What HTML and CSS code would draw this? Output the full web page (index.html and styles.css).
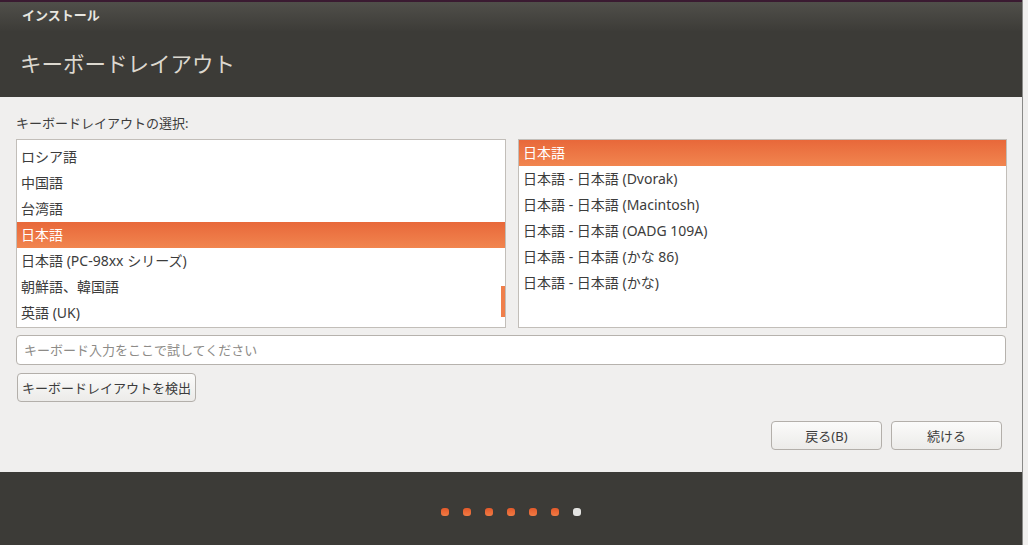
FILE: index.html
```html
<!DOCTYPE html>
<html lang="ja">
<head>
  <meta charset="UTF-8">
  <title>インストール</title>
  <link rel="stylesheet" href="styles.css">
</head>
<body>
  <div class="installer">
    <div class="top-strip"></div>

    <!-- Header -->
    <div class="header">
      <div class="window-title">インストール</div>
      <h1>キーボードレイアウト</h1>
    </div>

    <!-- Main content -->
    <div class="content">
      <p class="label">キーボードレイアウトの選択:</p>

      <div class="lists">
        <div class="list left-list">
          <div class="row">ロシア語</div>
          <div class="row">中国語</div>
          <div class="row">台湾語</div>
          <div class="row selected">日本語</div>
          <div class="row">日本語 (PC-98xx シリーズ)</div>
          <div class="row">朝鮮語、韓国語</div>
          <div class="row">英語 (UK)</div>
          <div class="scroll-thumb"></div>
        </div>
        <div class="list right-list">
          <div class="row selected">日本語</div>
          <div class="row">日本語 - 日本語 (Dvorak)</div>
          <div class="row">日本語 - 日本語 (Macintosh)</div>
          <div class="row">日本語 - 日本語 (OADG 109A)</div>
          <div class="row">日本語 - 日本語 (かな 86)</div>
          <div class="row">日本語 - 日本語 (かな)</div>
        </div>
      </div>

      <input class="test-input" type="text" placeholder="キーボード入力をここで試してください">

      <div>
        <button class="btn detect-btn">キーボードレイアウトを検出</button>
      </div>

      <div class="nav">
        <button class="btn nav-btn">戻る(B)</button>
        <button class="btn nav-btn">続ける</button>
      </div>
    </div>

    <!-- Progress dots -->
    <div class="footer">
      <span class="dot"></span>
      <span class="dot"></span>
      <span class="dot"></span>
      <span class="dot"></span>
      <span class="dot"></span>
      <span class="dot"></span>
      <span class="dot current"></span>
    </div>
  </div>
  <div class="desktop-edge"></div>
</body>
</html>
```

FILE: styles.css
```css
/* General */
body {
  margin: 0;
  height: 545px;
  display: flex;
  overflow: hidden;
  font-family: "Noto Sans", "Noto Sans CJK JP", sans-serif;
  font-size: 13px;
  color: #3c3c3c;
  background: #f0efee;
}

.installer {
  width: 1022px;
  display: flex;
  flex-direction: column;
  border-right: 1px solid #8a8a88;
}

.desktop-edge {
  flex: 1;
  background: #f0efee;
}

.top-strip {
  height: 2px;
  background: #3a1a31;
}

/* Header */
.header {
  height: 95px;
  box-sizing: border-box;
  padding: 4px 20px 0;
  background: linear-gradient(#504f4a, #3c3b37 30px);
  color: #dfdbd2;
}

.window-title {
  font-size: 13px;
  font-weight: bold;
  color: #e8e6e0;
  padding-left: 2px;
  line-height: 18px;
}

h1 {
  margin: 23px 0 0;
  font-size: 21.5px;
  font-weight: normal;
  line-height: 34px;
  color: #dcd8cf;
}

/* Content */
.content {
  flex: 1;
  background: #f0efee;
  padding: 0 16px 0 16px;
  display: flex;
  flex-direction: column;
}

.label {
  margin: 17px 0 7px;
  line-height: 18px;
}

.lists {
  display: grid;
  grid-template-columns: 490px 489px;
  gap: 12px;
}

.list {
  position: relative;
  height: 189px;
  box-sizing: border-box;
  background: #fff;
  border: 1px solid #c2beb9;
  overflow: hidden;
  font-size: 14px;
}

.left-list {
  padding-top: 4px;
}

.row {
  height: 26px;
  line-height: 26px;
  padding-left: 4px;
  white-space: nowrap;
}

.row.selected {
  background: linear-gradient(#e8683a, #f1854f);
  color: #fff;
}

.scroll-thumb {
  position: absolute;
  right: 0;
  top: 146px;
  width: 4px;
  height: 31px;
  background: #f07f4b;
}

.test-input {
  margin-top: 7px;
  width: 990px;
  height: 30px;
  box-sizing: border-box;
  border: 1px solid #b6b2ad;
  border-radius: 4px;
  padding: 0 7px;
  font-family: inherit;
  font-size: 13px;
  color: #3c3c3c;
  background: #fff;
}

.test-input::placeholder {
  color: #8d8b87;
}

.btn {
  height: 29px;
  margin-left: 1px;
  padding: 0;
  white-space: nowrap;
  font-family: inherit;
  font-size: 13px;
  color: #3c3c3c;
  border: 1px solid #b3afaa;
  border-radius: 4px;
  background: linear-gradient(#fbfbfa, #ecebe9);
}

.detect-btn {
  margin-top: 8px;
  width: 179px;
}

.nav {
  display: flex;
  justify-content: flex-end;
  gap: 9px;
  margin-top: 19px;
  padding-right: 4px;
}

.nav-btn {
  width: 111px;
  margin: 0;
}

/* Footer */
.footer {
  height: 73px;
  box-sizing: border-box;
  padding-top: 7px;
  background: #3c3b37;
  display: flex;
  justify-content: center;
  align-items: center;
  gap: 14px;
}

.dot {
  width: 8px;
  height: 8px;
  border-radius: 3px;
  background: linear-gradient(#e4592a, #f07b44);
}

.dot.current {
  background: #e3e3e1;
}
```
